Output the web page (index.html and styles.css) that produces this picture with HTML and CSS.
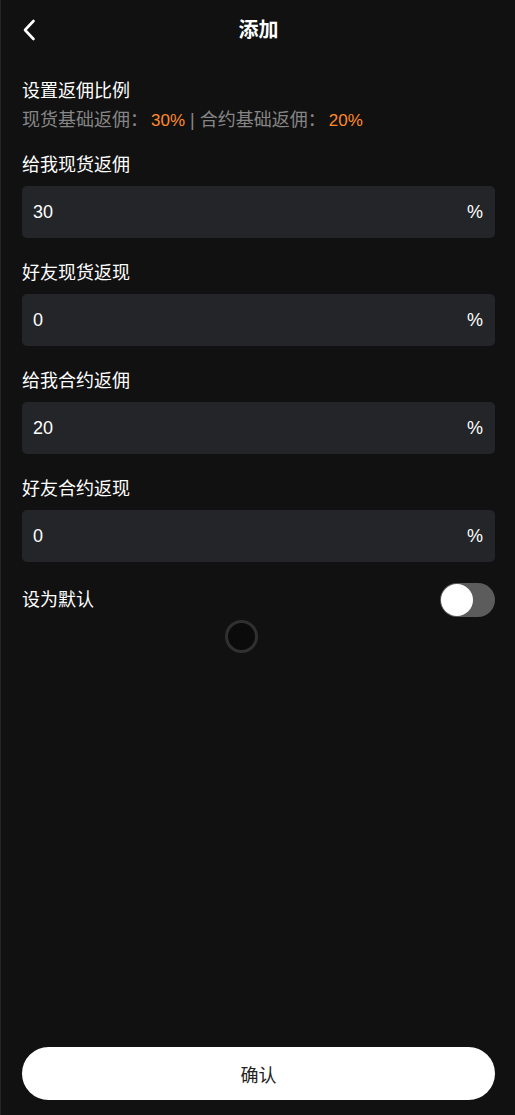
FILE: index.html
```html
<!DOCTYPE html>
<html lang="zh-CN">
<head>
<meta charset="utf-8">
<title>添加</title>
<link rel="stylesheet" href="styles.css">
</head>
<body>
<div class="page">
  <header class="header">
    <span class="back">
      <svg width="14" height="22" viewBox="0 0 14 22"><path d="M11.5 2 L3 11 L11.5 20" fill="none" stroke="#fff" stroke-width="2.6" stroke-linecap="round" stroke-linejoin="round"/></svg>
    </span>
    <h1 class="title">添加</h1>
  </header>

  <main class="content">
    <div class="intro">
      <div class="intro-title">设置返佣比例</div>
      <div class="intro-sub">现货基础返佣：<span class="hl">30%</span> | 合约基础返佣：<span class="hl">20%</span></div>
    </div>

    <div class="field">
      <div class="label">给我现货返佣</div>
      <div class="input"><span class="val">30</span><span class="unit">%</span></div>
    </div>
    <div class="field">
      <div class="label">好友现货返现</div>
      <div class="input"><span class="val">0</span><span class="unit">%</span></div>
    </div>
    <div class="field">
      <div class="label">给我合约返佣</div>
      <div class="input"><span class="val">20</span><span class="unit">%</span></div>
    </div>
    <div class="field">
      <div class="label">好友合约返现</div>
      <div class="input"><span class="val">0</span><span class="unit">%</span></div>
    </div>

    <div class="switch-row">
      <span class="label">设为默认</span>
      <span class="toggle"><span class="knob"></span></span>
    </div>
  </main>

  <div class="footer">
    <button class="confirm">确认</button>
  </div>

  <div class="loader"></div>
</div>
</body>
</html>
```

FILE: styles.css
```css
* { box-sizing: border-box; }
html, body {
  margin: 0;
  padding: 0;
  background: #111111;
}
body {
  font-family: "Liberation Sans", "Noto Sans CJK SC", sans-serif;
  color: #ffffff;
}
.page {
  position: relative;
  min-height: 100vh;
  display: flex;
  flex-direction: column;
  padding: 0 20px 15px 21px;
  border-left: 1px solid #262626;
}
.header {
  position: relative;
  height: 60px;
  display: flex;
  align-items: center;
  justify-content: center;
}
.back {
  position: absolute;
  left: 0;
  top: 19px;
  width: 14px;
  height: 22px;
  display: block;
}
.back svg { display: block; }
.title {
  margin: 0;
  font-size: 20px;
  font-weight: bold;
  line-height: 24px;
}
.content {
  display: flex;
  flex-direction: column;
  padding-top: 19px;
}
.intro-title {
  font-size: 18px;
  line-height: 24px;
}
.intro-sub {
  margin-top: 5px;
  font-size: 18px;
  line-height: 24px;
  color: #868686;
}
.hl {
  color: #ff8a2a;
  padding-left: 3px;
  font-size: 17px;
}
.field {
  margin-top: 20px;
}
.field + .field {
  margin-top: 23px;
}
.label {
  font-size: 18px;
  line-height: 24px;
  color: #ffffff;
}
.input {
  margin-top: 9px;
  height: 52px;
  border-radius: 5px;
  background: #242528;
  display: flex;
  align-items: center;
  justify-content: space-between;
  padding: 0 12px 0 11px;
  font-size: 18px;
}
.switch-row {
  margin-top: 21px;
  height: 34px;
  display: flex;
  align-items: center;
  justify-content: space-between;
}
.toggle {
  position: relative;
  width: 55px;
  height: 34px;
  border-radius: 17px;
  background: #5c5c5c;
  display: flex;
  align-items: center;
  padding-left: 1px;
}
.knob {
  width: 32px;
  height: 32px;
  border-radius: 50%;
  background: #ffffff;
}
.footer {
  margin-top: auto;
}
.confirm {
  display: block;
  width: 100%;
  height: 53px;
  border: none;
  border-radius: 27px;
  background: #ffffff;
  color: #222222;
  font-family: "Liberation Sans", "Noto Sans CJK SC", sans-serif;
  font-size: 18px;
}
.loader {
  position: absolute;
  left: 224px;
  top: 620px;
  width: 33px;
  height: 33px;
  border-radius: 50%;
  border: 3px solid #303030;
  background: #0b0b0b;
}
```
